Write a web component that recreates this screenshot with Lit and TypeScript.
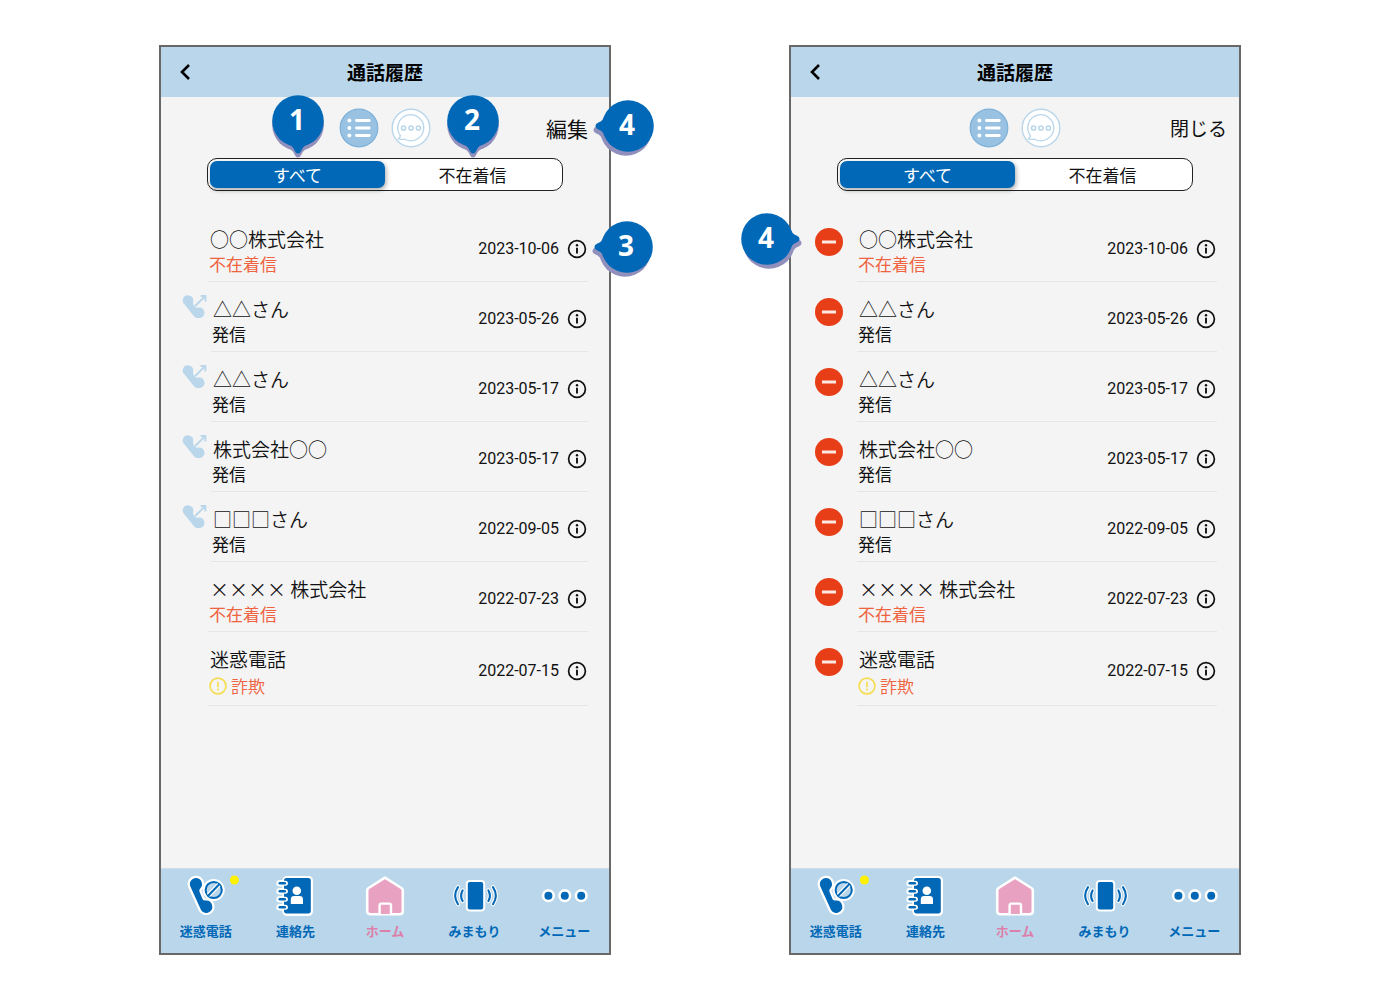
import { LitElement, html, css, svg, nothing } from "lit";
import { customElement, property, state } from "lit/decorators.js";
import { classMap } from "lit/directives/class-map.js";

type CallKind = "missed" | "outgoing" | "fraud";

interface Call {
  name: string;
  kind: CallKind;
  date: string;
}

const CALLS: Call[] = [
  { name: "○○株式会社", kind: "missed", date: "2023-10-06" },
  { name: "△△さん", kind: "outgoing", date: "2023-05-26" },
  { name: "△△さん", kind: "outgoing", date: "2023-05-17" },
  { name: "株式会社○○", kind: "outgoing", date: "2023-05-17" },
  { name: "□□□さん", kind: "outgoing", date: "2022-09-05" },
  { name: "×××× 株式会社", kind: "missed", date: "2022-07-23" },
  { name: "迷惑電話", kind: "fraud", date: "2022-07-15" },
];

const STATUS: Record<CallKind, string> = {
  missed: "不在着信",
  outgoing: "発信",
  fraud: "詐欺",
};

const BLUE = "#0068b6";
const PALE = "#b9d6ea";

const backIcon = html`<svg width="12" height="18" viewBox="0 0 12 18" aria-hidden="true">
  <path d="M10 2 L3 9 L10 16" fill="none" stroke="#000" stroke-width="2.6" />
</svg>`;

const listIcon = html`<svg width="40" height="40" viewBox="-20 -20 40 40" aria-hidden="true">
  <circle r="18.8" fill="#98c1e2" stroke="#7db1d9" stroke-width="1.2" />
  ${[-7.5, 0, 7.5].map(
    (y) => svg`<circle cx="-9.6" cy=${y} r="2" fill="#fff" />
      <path d=${`M-2.6 ${y} H10.2`} stroke="#fff" stroke-width="2.8" stroke-linecap="round" />`
  )}
</svg>`;

const chatIcon = html`<svg width="40" height="40" viewBox="-20 -20 40 40" aria-hidden="true">
  <circle r="18.8" fill="#fff" stroke=${PALE} stroke-width="1.4" />
  <path d="M-10.6 7.6 A13 13 0 1 1 -6.4 11.2 Q-9 11.6 -12.6 10.8 Q-10.8 9.6 -10.6 7.6 Z"
    fill="none" stroke=${PALE} stroke-width="1.3" stroke-linejoin="round" />
  ${[-7.4, 0, 7.4].map((x) => svg`<circle cx=${x} cy="0" r="2.1" fill="none" stroke=${PALE} stroke-width="1.5" />`)}
</svg>`;

const outgoingIcon = html`<svg width="24" height="24" viewBox="0 0 24 24" aria-hidden="true">
  <path d="M5.4 .4 A5 5 0 0 1 10.2 6.6 Q9.8 8.6 10.6 10 L12.4 12 Q13.8 13.2 15.8 12.6 A5.2 5.2 0 0 1 18.6 22.4 Q17.4 23 15.4 23 H14 Q12.4 22.8 11.2 21.4 L1.6 9.4 A5.1 5.1 0 0 1 5.4 .4 Z" fill=${PALE} />
  <path d="M12.2 11 L21.4 1.8 M17.6 1 H22.4 V6.6" fill="none" stroke=${PALE} stroke-width="1.9" />
</svg>`;

const infoIcon = html`<svg width="20" height="20" viewBox="0 0 20 20" aria-hidden="true">
  <circle cx="10" cy="10" r="8.4" fill="none" stroke="#111" stroke-width="1.7" />
  <circle cx="10" cy="6.2" r="1.2" fill="#111" />
  <path d="M10 8.8 V14.4" stroke="#111" stroke-width="1.9" />
</svg>`;

const removeIcon = html`<svg width="28" height="28" viewBox="0 0 28 28" aria-hidden="true">
  <circle cx="14" cy="14" r="14" fill="#e83e17" />
  <rect x="7" y="12.5" width="14" height="3" fill="#fbe9e4" />
</svg>`;

const cautionIcon = html`<svg width="18" height="18" viewBox="0 0 18 18" aria-hidden="true">
  <circle cx="9" cy="9" r="7.9" fill="none" stroke="#f6dc4e" stroke-width="1.7" />
  <path d="M9 4.8 V10.2 M9 11.6 V13.4" stroke="#f6dc4e" stroke-width="1.7" />
</svg>`;

const handset = "M10 2 A6.1 6.1 0 0 1 14.4 12.2 Q12.8 13.8 13.4 15.6 L16.6 23.2 Q17.4 24.8 19.6 24.6 A6.1 6.1 0 1 1 14.8 33.6 L4.4 10.6 A6.1 6.1 0 0 1 10 2 Z";
const ring = (x: number, y: number) => `M${x} ${y} H${x + 5}`;
const RINGS = [7.3, 15.3, 23.3, 31.3];

const NAV = [
  {
    label: "迷惑電話",
    art: svg`
      <path d=${handset} fill="#fff" stroke="#fff" stroke-width="4.6" stroke-linejoin="round" />
      <circle cx="27.7" cy="14" r="11" fill="#fff" />
      <path d=${handset} fill=${BLUE} />
      <circle cx="27.7" cy="14" r="9.8" fill="#fff" />
      <circle cx="27.7" cy="14" r="8.1" fill=${PALE} stroke=${BLUE} stroke-width="2" />
      <path d="M22.4 19.4 L33 8.6" stroke="#fff" stroke-width="4.4" />
      <path d="M22.2 19.8 L33.2 8.2" stroke=${BLUE} stroke-width="2" />
      <circle cx="48.4" cy="4" r="4.5" fill="#fff100" />`,
  },
  {
    label: "連絡先",
    art: svg`
      <rect x="7.4" y="0" width="30.6" height="40" rx="4.5" fill="#fff" />
      ${RINGS.map((y) => svg`<path d=${ring(4.6, y)} stroke="#fff" stroke-width="6.4" stroke-linecap="round" />`)}
      <rect x="9" y="2" width="26.8" height="35.4" rx="2.6" fill=${BLUE} />
      ${RINGS.map((y) => svg`<path d=${ring(5.4, y)} stroke="#fff" stroke-width="5" stroke-linecap="round" />
        <path d=${ring(4.8, y)} stroke=${BLUE} stroke-width="2.6" stroke-linecap="round" />`)}
      <circle cx="21.8" cy="14.8" r="4.3" fill="#fff" />
      <path d="M15.8 28 V23.4 Q15.8 20 19.2 20 H24.6 Q28 20 28 23.4 V28 Z" fill="#fff" />`,
  },
  {
    label: "ホーム",
    pink: true,
    art: svg`
      <path d="M20 1.6 L36.4 12 Q37.8 13 37.8 14.6 V35 Q37.8 38.2 34.6 38.2 H5.4 Q2.2 38.2 2.2 35 V14.6 Q2.2 13 3.6 12 Z" fill="#e9a1c2" stroke="#fff" stroke-width="2.6" stroke-linejoin="round" />
      <path d="M14.6 38 V29.4 Q14.6 27.6 16.4 27.6 H24.2 Q26 27.6 26 29.4 V38" fill="#e9a1c2" stroke="#fff" stroke-width="2.4" />`,
  },
  {
    label: "みまもり",
    art: svg`
      <rect x="10.8" y="4" width="19.4" height="31.4" rx="4" fill="#fff" />
      <rect x="12.8" y="6" width="15.4" height="27.4" rx="2" fill=${BLUE} />
      ${["M7.6 14.4 Q4.6 19.6 7.6 25", "M3 11.2 Q-2.6 19.6 3 28.2", "M33.4 14.4 Q36.4 19.6 33.4 25", "M38 11.2 Q43.6 19.6 38 28.2"].map(
        (d) => svg`<path d=${d} fill="none" stroke="#fff" stroke-width="4.2" stroke-linecap="round" />
          <path d=${d} fill="none" stroke=${BLUE} stroke-width="2.1" stroke-linecap="round" />`
      )}`,
  },
  {
    label: "メニュー",
    art: svg`${[4.4, 20.8, 37.2].map(
      (x) => svg`<circle cx=${x} cy="19.7" r="6.6" fill="#fff" /><circle cx=${x} cy="19.7" r="4" fill=${BLUE} />`
    )}`,
  },
];

/** Numbered callout whose nib points down, left or right. */
@customElement("step-marker")
export class StepMarker extends LitElement {
  @property() number = "1";
  @property() direction: "down" | "left" | "right" = "down";

  static styles = css`
    :host {
      display: block;
      width: 72px;
      height: 72px;
      pointer-events: none;
    }
    svg {
      display: block;
      overflow: visible;
    }
    text {
      font: 700 28px "Noto Sans", sans-serif;
      fill: #fff;
      text-anchor: middle;
    }
  `;

  render() {
    const angle = { down: 0, left: 90, right: -90 }[this.direction];
    const shift = { down: 0, left: -2, right: 2 }[this.direction];
    const shape = svg`<circle r="25.8" />
      <path d="M-12 22 Q-4.6 25 -3.4 29.6 Q-2.2 32.6 0 32.6 Q2.2 32.6 3.4 29.6 Q4.6 25 12 22 Z" />`;
    return html`<svg width="72" height="72" viewBox="-36 -36 72 72" role="img" aria-label=${this.number}>
      <g fill="#918fbc" transform=${`translate(${shift} 4) rotate(${angle})`}>${shape}</g>
      <g fill=${BLUE} transform=${`rotate(${angle})`}>${shape}</g>
      <text x="-1" y="9">${this.number}</text>
    </svg>`;
  }
}

/** Call history screen, in viewing or editing mode. */
@customElement("history-screen")
export class HistoryScreen extends LitElement {
  @property({ type: Boolean }) editing = false;
  @state() private tab = 0;

  static styles = css`
    :host {
      display: flex;
      flex-direction: column;
      box-sizing: border-box;
      min-width: 0;
      border: 2px solid #686868;
      background: #f4f4f4;
      color: #111;
      font-family: "Noto Sans CJK JP", sans-serif;
    }
    button {
      display: block;
      margin: 0;
      padding: 0;
      border: 0;
      background: none;
      color: inherit;
      font: inherit;
      cursor: pointer;
    }
    svg {
      display: block;
      overflow: visible;
    }
    .screen {
      display: flex;
      flex: 1;
      flex-direction: column;
    }
    .header {
      display: grid;
      grid-template-columns: 1fr auto 1fr;
      align-items: center;
      height: 50px;
      padding: 0 18px;
      background: #b9d6ea;
    }
    .back {
      justify-self: start;
    }
    .title {
      margin: 0;
      font-size: 19px;
      line-height: 28px;
      font-weight: 700;
      color: #000;
    }
    .toolbar {
      display: grid;
      grid-template-columns: 1fr auto 1fr;
      align-items: center;
      padding: 11px 21px 10px;
    }
    .views {
      grid-column: 2;
      display: flex;
      gap: 12px;
    }
    .action {
      position: relative;
      justify-self: end;
      font-size: 21px;
      line-height: 28px;
    }
    .editing .toolbar {
      padding-right: 12px;
      padding-left: 12px;
    }
    .editing .action {
      font-size: 19px;
    }
    .tabs {
      display: grid;
      grid-template-columns: 1fr 1fr;
      box-sizing: border-box;
      height: 33px;
      margin: 0 46px 21px;
      padding: 2px;
      border: 1px solid #222;
      border-radius: 10px;
      background: #fff;
    }
    .slot {
      position: relative;
      display: grid;
    }
    .tab {
      border-radius: 7px;
      font-size: 17px;
      line-height: 26px;
    }
    .selected {
      background: #0068b6;
      color: #fff;
      box-shadow: 1px 2px 5px rgba(0, 0, 0, 0.35);
    }
    .list {
      flex: 1;
      margin: 0;
      padding: 0 21px 0 0;
      list-style: none;
    }
    .editing .list {
      padding-right: 22px;
    }
    .row {
      display: flex;
    }
    .lead {
      box-sizing: border-box;
      flex: none;
      width: 47px;
      padding: 13px 0 0 22px;
    }
    .outgoing .lead {
      width: 50px;
    }
    .editing .lead {
      width: 66px;
      padding: 16px 0 0 24px;
    }
    .entry {
      display: flex;
      flex: 1;
      align-items: center;
      gap: 8px;
      min-width: 0;
      padding: 14px 1px 5px;
      border-bottom: 1px solid #e6e6e6;
    }
    .who {
      flex: 1;
      min-width: 0;
    }
    .name {
      padding-left: 1px;
      font-size: 19px;
      line-height: 26px;
      font-weight: 350;
    }
    .status {
      display: flex;
      align-items: center;
      gap: 4px;
      font-size: 17px;
      line-height: 24px;
    }
    .missed .status,
    .fraud .status {
      color: #ef6340;
    }
    .fraud .status {
      line-height: 28px;
      font-weight: 350;
    }
    .when {
      display: flex;
      align-items: center;
      gap: 8px;
      margin-top: -4px;
      font-family: Roboto, sans-serif;
      font-size: 16px;
      line-height: 20px;
    }
    .info,
    .anchor {
      position: relative;
    }
    .nav {
      display: grid;
      grid-template-columns: repeat(5, 1fr);
      padding: 7px 0 12px;
      border-top: 1px solid #cfdfea;
      background: #b9d6ea;
    }
    .item {
      display: flex;
      flex-direction: column;
      align-items: center;
      gap: 5px;
      color: #0068b6;
      font-size: 13px;
      line-height: 20px;
      font-weight: 700;
      text-decoration: none;
      white-space: nowrap;
    }
    .pink {
      color: #dd7fab;
    }
    .over {
      position: absolute;
      z-index: 1;
    }
    .above {
      bottom: 100%;
      left: 50%;
      margin: 0 0 4px -36px;
    }
    .beside {
      top: 50%;
      left: 100%;
      margin: -38px 0 0 4px;
    }
    .left-of {
      top: 50%;
      right: 100%;
      margin: -39px 12px 0 0;
    }
  `;

  private renderCall(call: Call, index: number) {
    const lead = this.editing
      ? html`<button aria-label="削除">${removeIcon}</button>`
      : call.kind === "outgoing"
        ? outgoingIcon
        : nothing;
    return html`<li class=${`row ${call.kind}`}>
      <div class="lead">
        <div class="anchor">
          ${lead}
          ${this.editing && index === 0
            ? html`<step-marker class="over left-of" number="4" direction="right"></step-marker>`
            : nothing}
        </div>
      </div>
      <div class="entry">
        <div class="who">
          <div class="name">${call.name}</div>
          <div class="status">${call.kind === "fraud" ? cautionIcon : nothing}<span>${STATUS[call.kind]}</span></div>
        </div>
        <div class="when">
          <time datetime=${call.date}>${call.date}</time>
          <div class="info">
            <button aria-label="詳細">${infoIcon}</button>
            ${!this.editing && index === 0
              ? html`<step-marker class="over beside" number="3" direction="left"></step-marker>`
              : nothing}
          </div>
        </div>
      </div>
    </li>`;
  }

  render() {
    return html`<div class=${classMap({ screen: true, editing: this.editing })}>
      <header class="header">
        <button class="back" aria-label="戻る">${backIcon}</button>
        <h1 class="title">通話履歴</h1>
      </header>
      <div class="toolbar">
        <div class="views">
          <button aria-label="リスト">${listIcon}</button>
          <button aria-label="メッセージ">${chatIcon}</button>
        </div>
        <div class="action">
          <button>${this.editing ? "閉じる" : "編集"}</button>
          ${this.editing ? nothing : html`<step-marker class="over beside" number="4" direction="left"></step-marker>`}
        </div>
      </div>
      <div class="tabs">
        ${["すべて", "不在着信"].map(
          (label, i) => html`<div class="slot">
            <button
              class=${classMap({ tab: true, selected: this.tab === i })}
              aria-pressed=${this.tab === i ? "true" : "false"}
              @click=${() => (this.tab = i)}
            >${label}</button>
            ${this.editing
              ? nothing
              : html`<step-marker class="over above" number=${i + 1} direction="down"></step-marker>`}
          </div>`
        )}
      </div>
      <ul class="list">
        ${CALLS.map((call, i) => this.renderCall(call, i))}
      </ul>
      <nav class="nav">
        ${NAV.map(
          (item) => html`<a class=${classMap({ item: true, pink: !!item.pink })} href="#">
            <svg width="40" height="40" viewBox="0 0 40 40" aria-hidden="true">${item.art}</svg>
            <span>${item.label}</span>
          </a>`
        )}
      </nav>
    </div>`;
  }
}

@customElement("app-root")
export class AppRoot extends LitElement {
  static styles = css`
    :host {
      display: grid;
      grid-template-columns: 1fr 1fr;
      gap: 178px;
      box-sizing: border-box;
      min-height: 100vh;
      padding: 45px 159px 46px;
      background: #fff;
    }
  `;

  render() {
    return html`<history-screen lang="ja"></history-screen>
      <history-screen lang="ja" editing></history-screen>`;
  }
}
